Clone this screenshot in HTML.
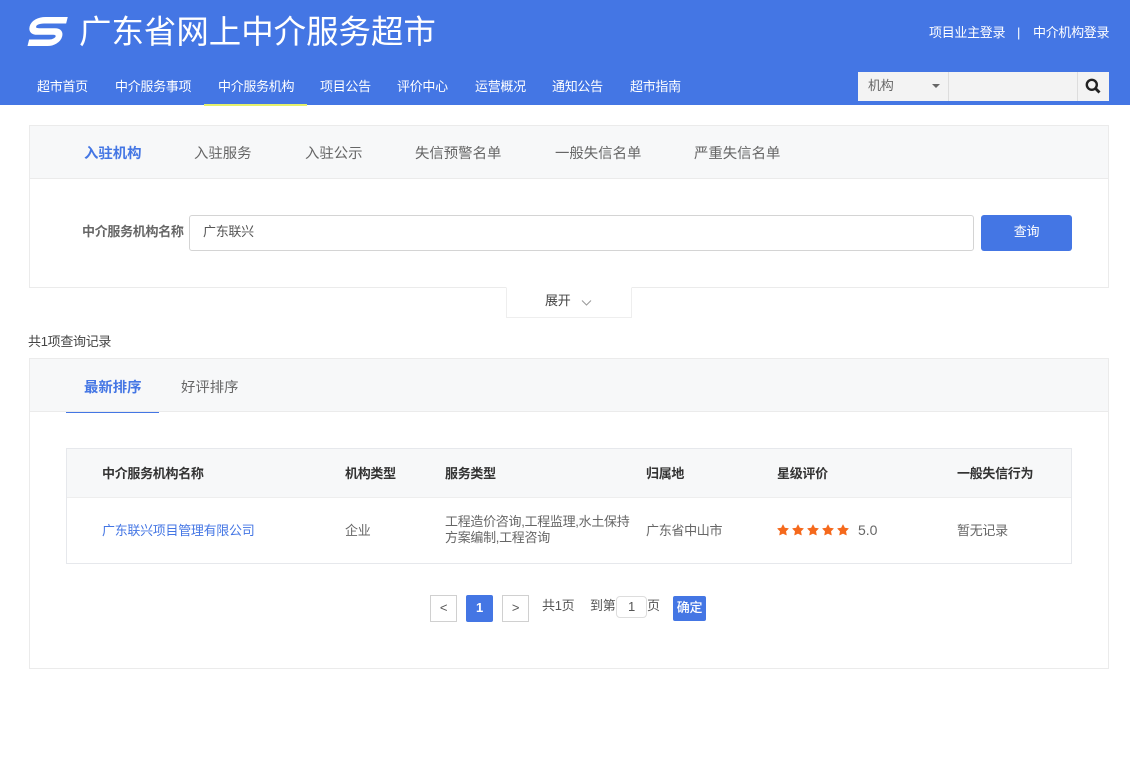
<!DOCTYPE html>
<html lang="zh-CN"><head><meta charset="utf-8"><title>广东省网上中介服务超市</title>
<style>
*{box-sizing:border-box;margin:0;padding:0}
html,body{width:1130px;height:769px;overflow:hidden;background:#fff}
body{position:relative;font-family:"Liberation Sans","Noto Sans CJK SC",sans-serif;font-size:13px;letter-spacing:-.3px;color:#555}
.a{position:absolute;white-space:nowrap;line-height:18px}
.nav{color:#fff;top:78px}
.tab{top:145px;color:#666;font-size:14.4px;letter-spacing:0}
.th{top:465px;font-weight:bold;color:#333}
.box{position:absolute;border:1px solid #ebebeb;background:#fff}
</style></head><body>
<div class="a" style="left:0;top:0;width:1130px;height:105px;background:#4476e4"></div>
<svg class="a" style="left:28px;top:16px;overflow:visible" width="40" height="31" viewBox="0 0 40 31"><path transform="translate(4 0) skewX(-14)" fill="none" stroke="#fff" stroke-width="6.500" stroke-linejoin="round" d="M36 4.200H14C7 4.200 3.500 7 3.500 10.500C3.500 14 6 15.500 10 15.500H26C30.500 15.500 32 18 32 20.500C32 24 28 26.800 23 26.800H3"/></svg>
<div class="a" style="left:79px;top:10px;font-size:32.45px;line-height:44px;letter-spacing:0;color:#fff">广东省网上中介服务超市</div>
<div class="a" style="left:929px;top:24px;color:#fff">项目业主登录</div>
<div class="a" style="left:1017px;top:24px;color:#fff">|</div>
<div class="a" style="left:1033px;top:24px;color:#fff">中介机构登录</div>
<div class="a nav" style="left:37px">超市首页</div>
<div class="a nav" style="left:115px">中介服务事项</div>
<div class="a nav" style="left:218px">中介服务机构</div>
<div class="a nav" style="left:320px">项目公告</div>
<div class="a nav" style="left:397px">评价中心</div>
<div class="a nav" style="left:475px">运营概况</div>
<div class="a nav" style="left:552px">通知公告</div>
<div class="a nav" style="left:630px">超市指南</div>
<div class="a" style="left:204px;top:104px;width:103px;height:2px;background:#e4f06c"></div>
<div class="a" style="left:858px;top:72px;width:251px;height:29px;background:#f3f3f3"></div>
<div class="a" style="left:948px;top:72px;width:1px;height:29px;background:#ddd"></div>
<div class="a" style="left:1077px;top:72px;width:1px;height:29px;background:#ddd"></div>
<div class="a" style="left:868px;top:77px;color:#666">机构</div>
<div class="a" style="left:932px;top:84px;width:0;height:0;border:4px solid transparent;border-top-color:#666;border-bottom:0"></div>
<svg class="a" style="left:1085px;top:78px" width="16" height="16" viewBox="0 0 16 16"><circle cx="6.800" cy="6.800" r="5" fill="none" stroke="#222" stroke-width="2.400"/><path d="M10.500 10.500L14.500 14.500" stroke="#222" stroke-width="2.800"/></svg>

<div class="box" style="left:29px;top:125px;width:1080px;height:163px"></div>
<div class="a" style="left:30px;top:126px;width:1078px;height:53px;background:#f7f8f9;border-bottom:1px solid #ebebeb"></div>
<div class="a tab" style="left:84px;color:#4476e4;font-weight:bold">入驻机构</div>
<div class="a tab" style="left:194px">入驻服务</div>
<div class="a tab" style="left:305px">入驻公示</div>
<div class="a tab" style="left:415px">失信预警名单</div>
<div class="a tab" style="left:555px">一般失信名单</div>
<div class="a tab" style="left:694px">严重失信名单</div>
<div class="a" style="left:82px;top:223px;font-weight:bold;color:#666">中介服务机构名称</div>
<div class="box" style="left:189px;top:215px;width:785px;height:36px;border-radius:3px;border-color:#d4d4d4"></div>
<div class="a" style="left:203px;top:223px;color:#555">广东联兴</div>
<div class="a" style="left:981px;top:215px;width:91px;height:36px;background:#4476e4;border-radius:3px;color:#fff;text-align:center;line-height:33px">查询</div>
<div class="a" style="left:506px;top:287px;width:126px;height:31px;background:#fff;border:1px solid #eee;border-top:1px solid #fff"></div>
<div class="a" style="left:545px;top:292px;color:#444">展开</div>
<svg class="a" style="left:581px;top:299px" width="11" height="8" viewBox="0 0 11 8"><path d="M1 1.500L5.500 6L10 1.500" fill="none" stroke="#999"/></svg>
<div class="a" style="left:28px;top:333px;color:#444">共1项查询记录</div>

<div class="box" style="left:29px;top:358px;width:1080px;height:311px"></div>
<div class="a" style="left:30px;top:359px;width:1078px;height:53px;background:#f7f8f9;border-bottom:1px solid #ebebeb"></div>
<div class="a" style="left:66px;top:412px;width:93px;height:1px;background:#4476e4"></div>
<div class="a" style="left:84px;top:379px;color:#4476e4;font-weight:bold;font-size:14.4px;letter-spacing:0">最新排序</div>
<div class="a" style="left:181px;top:379px;color:#666;font-size:14.4px;letter-spacing:0">好评排序</div>

<div class="box" style="left:66px;top:448px;width:1006px;height:116px;border-color:#e6e8ec"></div>
<div class="a" style="left:67px;top:449px;width:1004px;height:49px;background:#f7f8f9;border-bottom:1px solid #eee"></div>
<div class="a th" style="left:102px">中介服务机构名称</div>
<div class="a th" style="left:345px">机构类型</div>
<div class="a th" style="left:445px">服务类型</div>
<div class="a th" style="left:646px">归属地</div>
<div class="a th" style="left:777px">星级评价</div>
<div class="a th" style="left:957px">一般失信行为</div>
<div class="a" style="left:102px;top:522px;color:#4476e4">广东联兴项目管理有限公司</div>
<div class="a" style="left:345px;top:522px;color:#666">企业</div>
<div class="a" style="left:445px;top:514px;line-height:16px;color:#666">工程造价咨询,工程监理,水土保持<br>方案编制,工程咨询</div>
<div class="a" style="left:646px;top:522px;color:#666">广东省中山市</div>
<svg class="a" style="left:777px;top:524px" width="73" height="12" viewBox="0 0 73 12" fill="#f5691c" stroke="#f5691c" stroke-width=".6" stroke-linejoin="round"><path d="M6 .8L7.700 4.100 11.400 4.600 8.700 7.300 9.400 11 6 9.300 2.600 11 3.300 7.300 .6 4.600 4.300 4.100Z"/><path transform="translate(15)" d="M6 .8L7.700 4.100 11.400 4.600 8.700 7.300 9.400 11 6 9.300 2.600 11 3.300 7.300 .6 4.600 4.300 4.100Z"/><path transform="translate(30)" d="M6 .8L7.700 4.100 11.400 4.600 8.700 7.300 9.400 11 6 9.300 2.600 11 3.300 7.300 .6 4.600 4.300 4.100Z"/><path transform="translate(45)" d="M6 .8L7.700 4.100 11.400 4.600 8.700 7.300 9.400 11 6 9.300 2.600 11 3.300 7.300 .6 4.600 4.300 4.100Z"/><path transform="translate(60)" d="M6 .8L7.700 4.100 11.400 4.600 8.700 7.300 9.400 11 6 9.300 2.600 11 3.300 7.300 .6 4.600 4.300 4.100Z"/></svg>
<div class="a" style="left:858px;top:521px;font-size:14px;letter-spacing:0;color:#666">5.0</div>
<div class="a" style="left:957px;top:522px;color:#666">暂无记录</div>

<div class="box" style="left:430px;top:595px;width:27px;height:27px;border-color:#d0d0d0;text-align:center;line-height:24px;color:#555">&lt;</div>
<div class="a" style="left:466px;top:595px;width:27px;height:27px;background:#4476e4;border-radius:2px;color:#fff;text-align:center;line-height:25px;font-weight:bold">1</div>
<div class="box" style="left:502px;top:595px;width:27px;height:27px;border-color:#d0d0d0;text-align:center;line-height:24px;color:#555">&gt;</div>
<div class="a" style="left:542px;top:597px;color:#555">共1页</div>
<div class="a" style="left:590px;top:597px;color:#555">到第</div>
<div class="box" style="left:616px;top:596px;width:31px;height:22px;border-color:#ddd;border-radius:4px;text-align:center;line-height:19px;color:#555">1</div>
<div class="a" style="left:647px;top:597px;color:#555">页</div>
<div class="a" style="left:673px;top:596px;width:33px;height:25px;background:#4476e4;border-radius:2px;color:#fff;text-align:center;line-height:23px;font-size:13px;font-weight:500">确定</div>
</body></html>
